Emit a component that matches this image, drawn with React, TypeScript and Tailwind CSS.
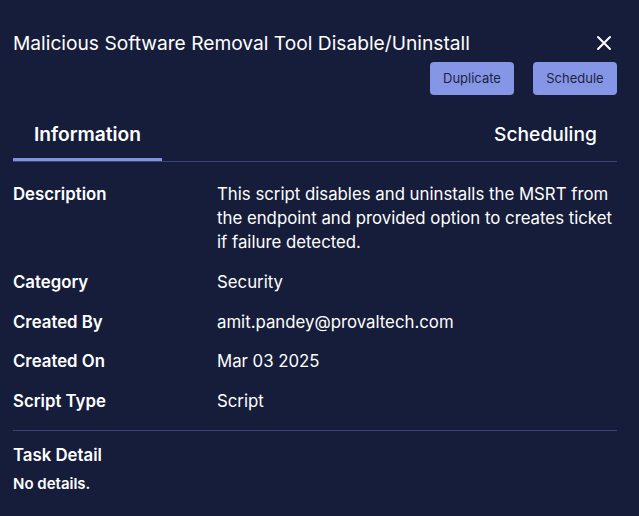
import React from "react";

const rows: [string, string][] = [
  ["Category", "Security"],
  ["Created By", "amit.pandey@provaltech.com"],
  ["Created On", "Mar 03 2025"],
  ["Script Type", "Script"],
];

export default function App() {
  return (
    <div
      className="w-[639px] h-[516px] bg-[#161d3a] text-white overflow-hidden"
      style={{ fontFamily: "Inter, 'Noto Sans', sans-serif" }}
    >
      <div className="pl-[13px] pr-[22px] pt-[31px]">
        <div className="flex items-center justify-between">
          <h1 className="text-[19.2px] leading-[24px] font-normal text-white">
            Malicious Software Removal Tool Disable/Uninstall
          </h1>
          <svg width="16" height="16" viewBox="0 0 16 16" className="mr-[5px]">
            <path d="M2 2 L14 14 M14 2 L2 14" stroke="white" strokeWidth="2" strokeLinecap="round" />
          </svg>
        </div>
        <div className="flex justify-end gap-[19px] mt-[7px]">
          <button className="h-[33px] w-[84px] rounded-[4px] bg-[#8696e6] text-[#1c2340] text-[13px]">
            Duplicate
          </button>
          <button className="h-[33px] w-[84px] rounded-[4px] bg-[#8696e6] text-[#1c2340] text-[13px]">
            Schedule
          </button>
        </div>
        <div className="mt-[14px] flex border-b border-[#3b4572] relative">
          <div className="w-[149px] h-[52px] flex items-center justify-center text-[19.2px] font-semibold border-b-[3px] border-[#7f93e0] -mb-[1px] pt-[1px]">
            Information
          </div>
          <div className="flex-1" />
          <div className="w-[143px] h-[52px] flex items-center justify-center text-[19.2px] font-medium pb-[2px]">
            Scheduling
          </div>
        </div>
        <div className="mt-[20px] flex text-[16.8px] leading-[24px]">
          <div className="w-[204px] font-semibold">Description</div>
          <div className="flex-1">
            This script disables and uninstalls the MSRT from the endpoint and provided option to creates ticket if failure detected.
          </div>
        </div>
        <div className="mt-[16px] flex flex-col gap-[15.5px]">
          {rows.map(([k, v]) => (
            <div key={k} className="flex text-[16.8px] leading-[24px]">
              <div className="w-[204px] font-semibold">{k}</div>
              <div className="flex-1">{v}</div>
            </div>
          ))}
        </div>
        <div className="mt-[17px] border-t border-[#3b4572]" />
        <div className="mt-[12px] text-[16.8px] leading-[24px] font-semibold">Task Detail</div>
        <div className="mt-[7px] text-[15px] leading-[20px] font-semibold">No details.</div>
      </div>
    </div>
  );
}
